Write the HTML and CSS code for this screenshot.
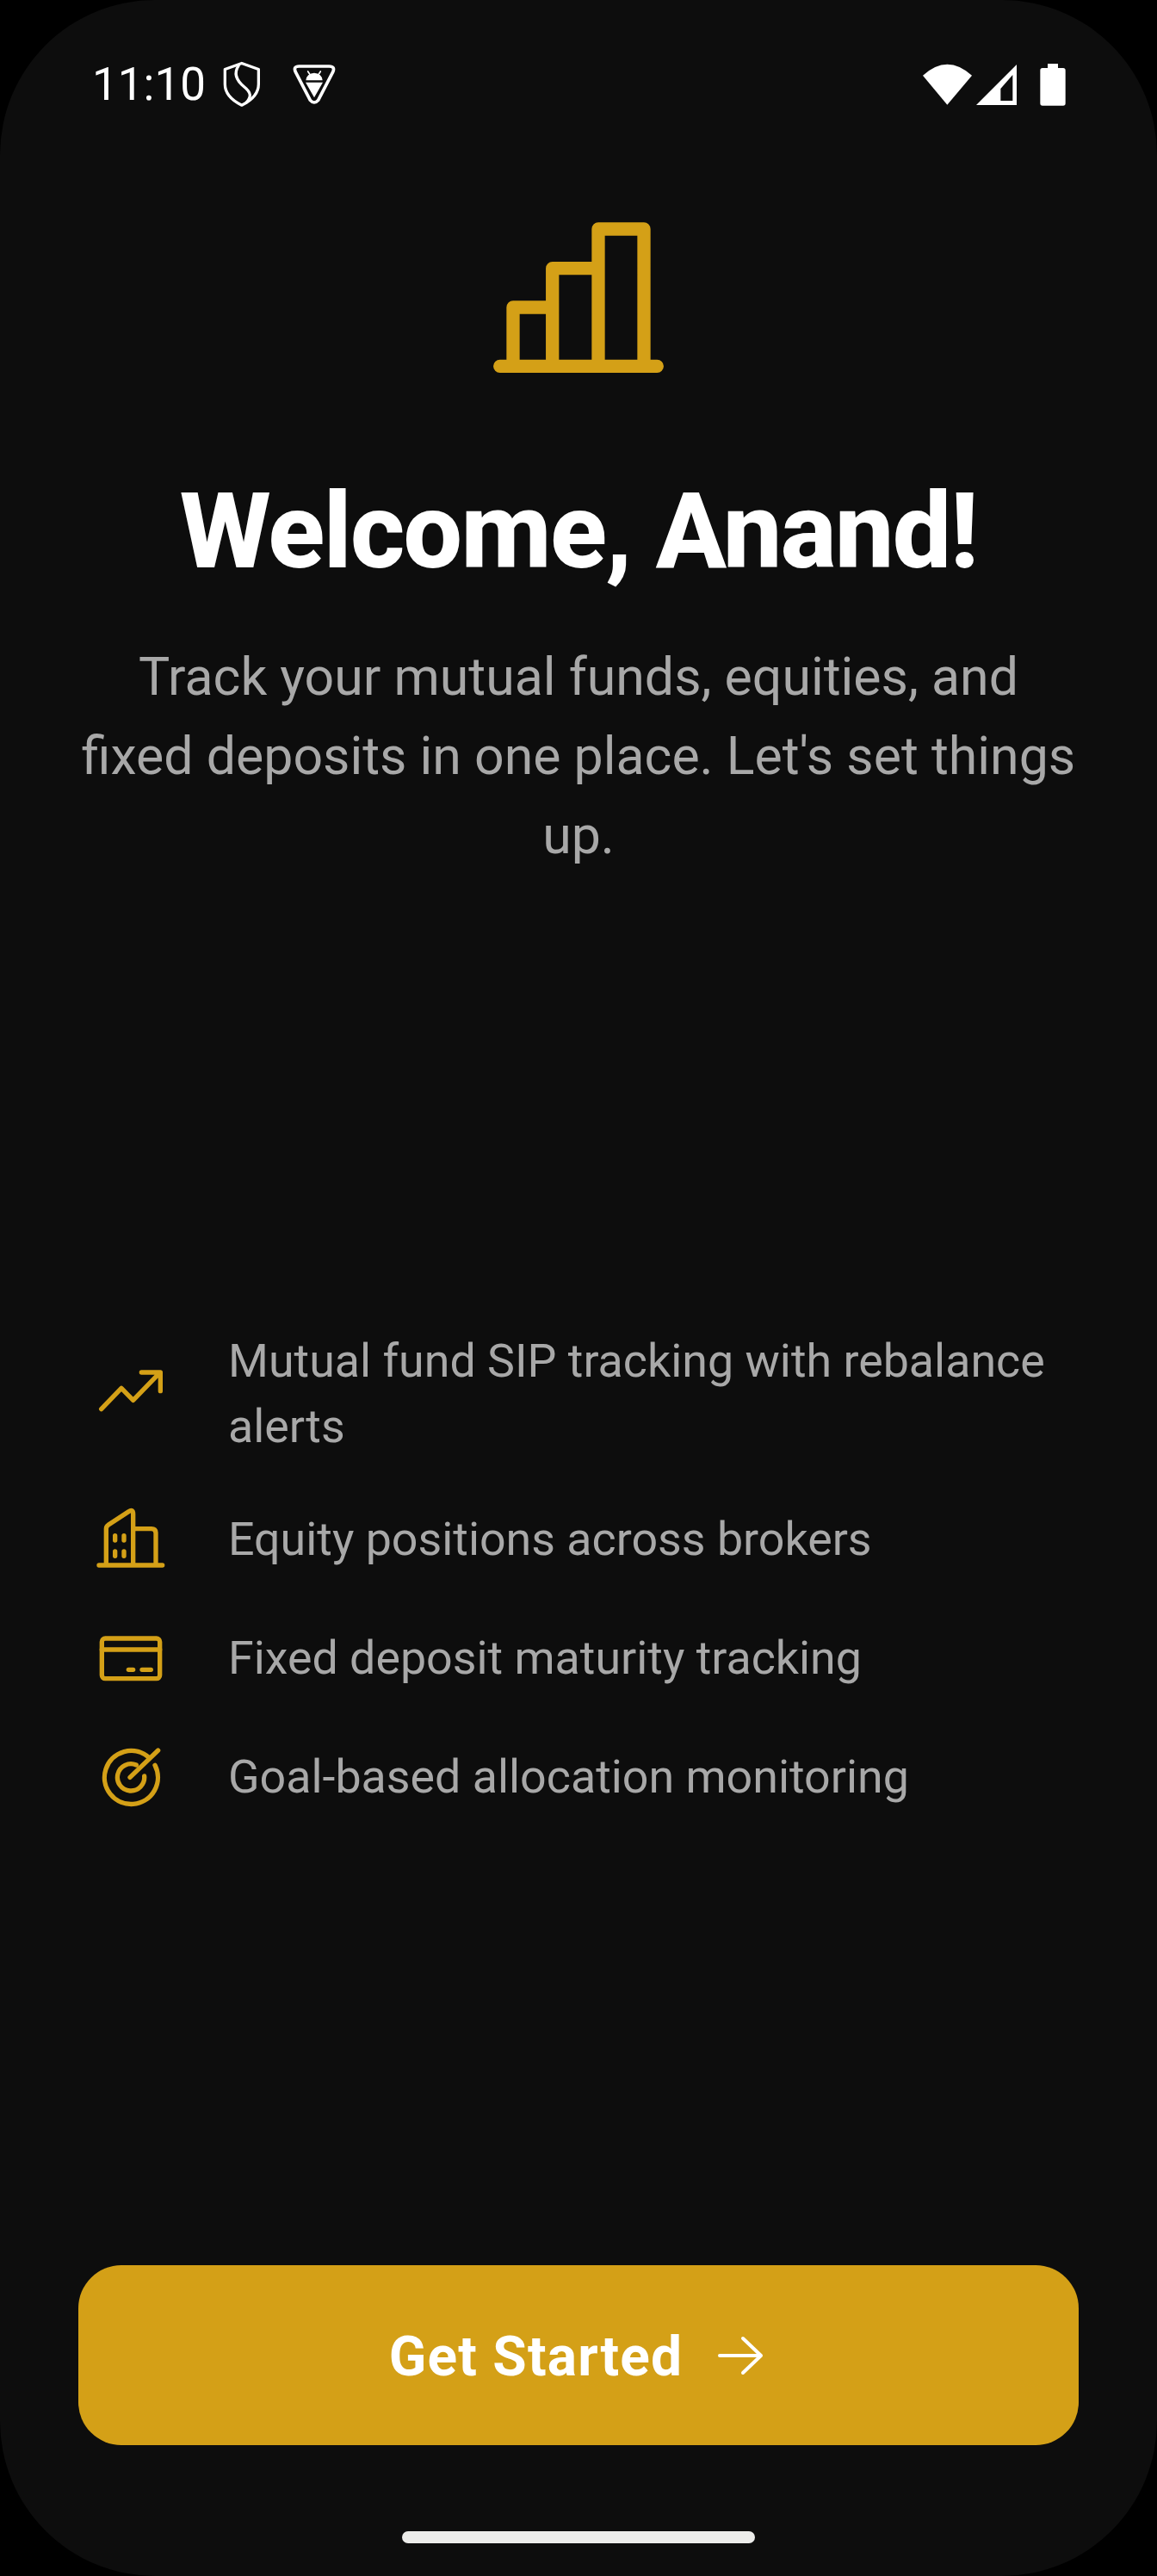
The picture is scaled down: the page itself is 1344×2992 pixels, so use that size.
FILE: index.html
```html
<!DOCTYPE html>
<html lang="en">
<head>
<meta charset="utf-8">
<title>Welcome</title>
<link rel="stylesheet" href="styles.css">
</head>
<body>
<main class="screen">
  <header class="status">
    <div class="status-left">
      <span class="clock">11:10</span>
      <svg class="ic-shield" viewBox="783 218 127 156"><path class="st-w8" d="M846,222 L905,243 V295 Q905,340 846,369 Q787,340 787,295 V243 Z"/><path class="st-w8" d="M835,230 C815,260 830,285 855,305 C880,325 880,340 862,360"/></svg>
      <svg class="ic-android" viewBox="1023 230 150 138"><path class="st-w9" d="M1045,236 H1150 Q1172,236 1163,256 L1112,354 Q1098,370 1084,354 L1033,256 Q1024,236 1045,236 Z"/><path class="fill-w" d="M1069,285 A29,26 0 0 1 1127,285 Z M1068,292 H1128 L1098,345 Z"/><path class="st-w4" d="M1084,266 L1076,254 M1112,266 L1120,254"/></svg>
    </div>
    <div class="status-right">
      <svg class="ic-wifi" viewBox="213 222 171 144"><path class="fill-w" d="M213,263 Q298,185 384,263 L298,365 Z"/></svg>
      <svg class="ic-signal" viewBox="400 226 141 141"><path class="fill-w" fill-rule="evenodd" d="M400,367 L541,226 V367 Z M485,352 H527 V262 L485,310 Z"/></svg>
      <svg class="ic-batt" viewBox="625 222 88 147"><path class="fill-w" d="M651,222 H687 V237 H705 Q713,237 713,245 V360 Q713,368 705,368 H633 Q625,368 625,360 V245 Q625,237 633,237 H651 Z"/></svg>
    </div>
  </header>

  <section class="hero">
    <svg class="logo" viewBox="573 258 198 175"><path class="st-gold st-logo" d="M580.7,425.3 H763.3 M596,425.3 V357 H641.7 M641.7,425.3 V311.7 H695 M695,425.3 V266 H748 V425.3"/></svg>
    <h1 class="title">Welcome, Anand!</h1>
    <p class="desc">Track your mutual funds, equities, and fixed deposits in one place. Let's set things up.</p>
  </section>

  <section class="middle">
    <ul class="features">
      <li class="feature">
        <svg class="f-icon" viewBox="51 45 270 270"><path class="st-gold st-f" d="M83,233 L153,160 L194,202 L287,106 M223,105 H289 V170"/></svg>
        <span class="f-text">Mutual fund SIP tracking with rebalance alerts</span>
      </li>
      <li class="feature">
        <svg class="f-icon" viewBox="51 12 270 270"><path class="st-gold st-f" d="M75,237 H296 M100,237 V110 Q100,102 107,97 L178,50 Q194,40 194,58 V237 M194,110 H258 Q273,110 273,125 V237 M131,134 V150 M162,134 V150 M131,189 V205 M162,189 V205"/></svg>
        <span class="f-text">Equity positions across brokers</span>
      </li>
      <li class="feature">
        <svg class="f-icon" viewBox="51 3 270 270"><rect class="st-gold st-f" x="85" y="69" width="202" height="140" rx="12"/><path class="st-gold st-f" d="M85,108 H287 M178,178 H194 M225,178 H256"/></svg>
        <span class="f-text">Fixed deposit maturity tracking</span>
      </li>
      <li class="feature">
        <svg class="f-icon" viewBox="51 24 270 270"><path class="st-gold st-f" d="M248,90 A93,93 0 1 0 270,118 M205,117 A47,47 0 1 0 233,156 M183,160 L281,66"/></svg>
        <span class="f-text">Goal-based allocation monitoring</span>
      </li>
    </ul>
  </section>

  <button class="cta" type="button">
    <span class="cta-label">Get Started</span>
    <svg class="cta-arrow" viewBox="0 0 54 46"><path class="st-arrow" d="M2,23 H50 M29,3 L50,23 L29,43"/></svg>
  </button>
  <div class="home-wrap"><div class="home"></div></div>
</main>
</body>
</html>
```

FILE: styles.css
```css
* { box-sizing: border-box; }
html, body { margin: 0; padding: 0; background: #000; }
body { width: 1344px; height: 2992px; overflow: hidden; font-family: Roboto, sans-serif; }

.screen {
  width: 1344px;
  height: 2992px;
  background: #0d0d0d;
  border-radius: 180px;
  overflow: hidden;
  display: flex;
  flex-direction: column;
}

.status {
  flex: none;
  height: 196px;
  padding: 0 106px 0 107px;
  display: flex;
  align-items: center;
  justify-content: space-between;
}
.status-left, .status-right { display: flex; align-items: center; }
.clock { color: #fff; font-size: 53px; line-height: 60px; }
.ic-shield { width: 42px; height: 52px; margin-left: 21px; }
.ic-android { width: 50px; height: 46px; margin-left: 38px; }
.ic-wifi { width: 57px; height: 48px; }
.ic-signal { width: 47px; height: 47px; margin-left: 5px; }
.ic-batt { width: 30px; height: 49px; margin-left: 27px; }

svg { display: block; flex: none; overflow: visible; }
.st-w8, .st-w9, .st-w4, .st-gold, .st-arrow { fill: none; stroke-linecap: round; stroke-linejoin: round; }
.st-w8 { stroke: #fff; stroke-width: 10; }
.st-w9 { stroke: #fff; stroke-width: 11; }
.st-w4 { stroke: #fff; stroke-width: 5; }
.fill-w { fill: #fff; }
.st-gold { stroke: #d4a017; }
.st-logo { stroke-width: 15.3; }
.st-f { stroke-width: 16; }
.st-arrow { stroke: #fff; stroke-width: 4; }

.hero {
  flex: none;
  padding: 62px 91px 0;
  display: flex;
  flex-direction: column;
  align-items: center;
  text-align: center;
}
.logo { width: 198px; height: 175px; }
.title {
  margin: 119px 0 0;
  color: #fff;
  font-size: 121.6px;
  font-weight: 800;
  line-height: 132px;
  letter-spacing: -1.6px;
  white-space: nowrap;
}
.desc {
  margin: 57px 0 0;
  color: #a8a8a8;
  font-size: 60.8px;
  line-height: 92px;
}

.middle {
  flex: 1;
  min-height: 0;
  display: flex;
  align-items: center;
  padding: 4px 91px 0;
}
.features {
  list-style: none;
  margin: 0;
  padding: 0 16px;
  width: 100%;
  display: flex;
  flex-direction: column;
  gap: 48px;
}
.feature { display: flex; align-items: center; gap: 68px; }
.f-icon { width: 90px; height: 90px; }
.f-text { color: #a8a8a8; font-size: 53.76px; line-height: 76px; }

.cta {
  flex: none;
  margin: 0 91px;
  height: 209px;
  width: 1162px;
  border: 0;
  border-radius: 50px;
  background: #d4a017;
  color: #fff;
  font-family: Roboto, sans-serif;
  font-size: 64px;
  font-weight: 700;
  letter-spacing: 1.2px;
  display: flex;
  align-items: center;
  justify-content: center;
  gap: 41px;
}
.cta-label { padding-top: 4px; }
.cta-arrow { width: 54px; height: 46px; margin-right: 4px; }

.home-wrap {
  flex: none;
  height: 152px;
  padding-top: 100px;
  display: flex;
  justify-content: center;
}
.home { width: 410px; height: 14px; border-radius: 7px; background: #ececea; }
```
